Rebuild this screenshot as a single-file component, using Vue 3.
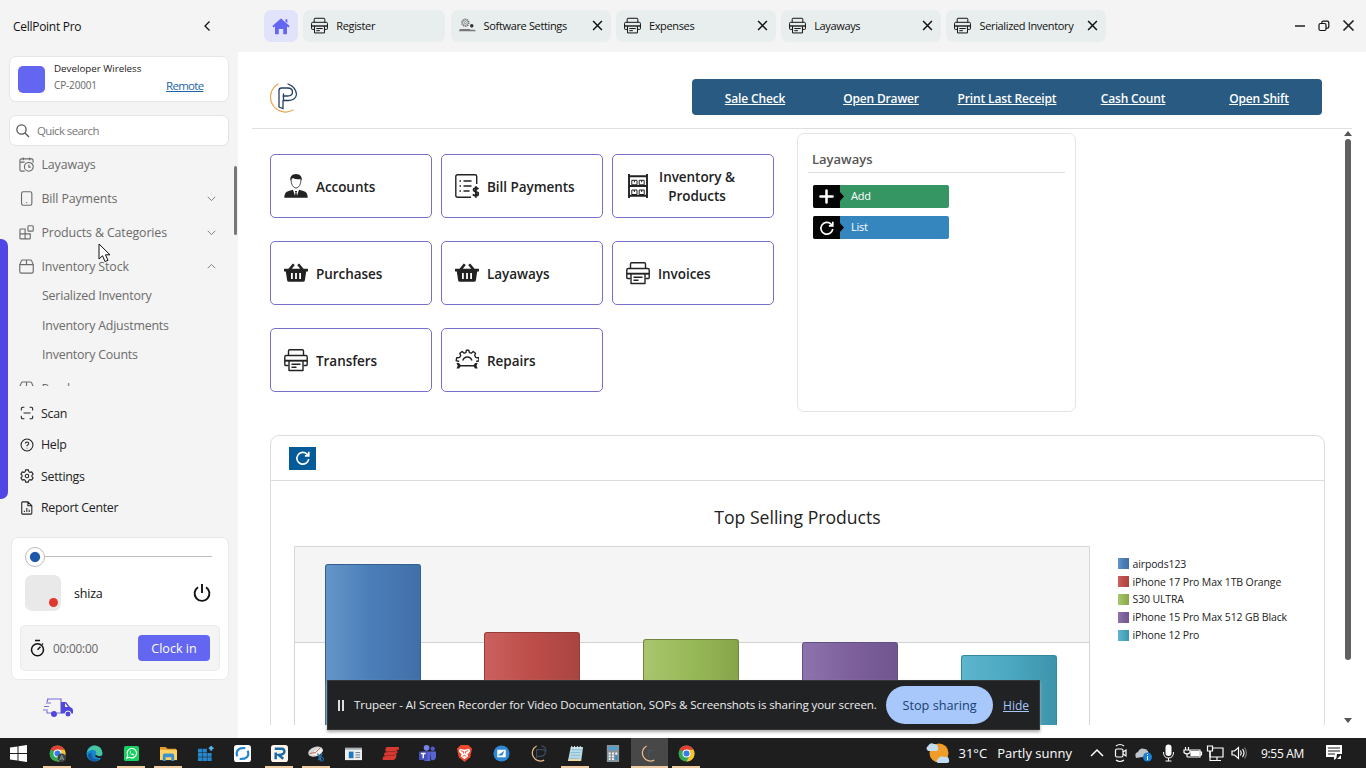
<template>
  <div class="screen">
    <!-- 图标集合 -->
    <svg class="sprite" aria-hidden="true">
      <symbol id="printer" viewBox="0 0 24 24">
        <g fill="none" stroke="currentColor" stroke-width="1.4" stroke-linejoin="round">
          <path d="M4.500 7.500V3q0-1.200 1.200-1.200h12.600q1.200 0 1.200 1.200v4.500" />
          <path d="M4.500 17.500H1.800q-1 0-1-1V9q0-1.500 1.500-1.500h19.400q1.500 0 1.500 1.500v7.500q0 1-1 1h-2.700" />
          <path d="M.8 12.700h22.400" stroke-width="1.900" />
          <path d="M5 13v9.500h14V13M7.500 16.300h9M7.500 19.300h5" />
        </g>
      </symbol>
      <symbol id="basket" viewBox="0 0 24 24">
        <path fill="currentColor" fill-rule="evenodd" d="M.5 7.800h4L8.800 2.600l2 1.400-3 3.800h8.400l-3-3.800 2-1.400 4.300 5.200h4q.5 0 .5.500V10q0 .6-.6.600h-1.200l-1.300 8.600q-.2 1.600-1.900 1.600H5q-1.700 0-1.900-1.600l-1.300-8.600H.6Q0 10.600 0 10V8.300q0-.5.500-.5zM7 12v6h1.800v-6zm4.100 0v6h1.800v-6zm4.100 0v6H17v-6z" />
      </symbol>
      <symbol id="person" viewBox="0 0 24 24">
        <path d="M7 5q0 8 5 9.200Q17 13 17 5" fill="none" stroke="currentColor" stroke-width=".8" />
        <path fill="currentColor" d="M6.500 6.500Q5.500 0 12 0q6.500 0 5.500 6.500L16.500 5Q12 6 9 4 7.500 4.700 6.500 6.500zM.3 23.800q0-5.500 3.700-6.500l5-1.500 2 6 .5-3.300-.7-1.500h2.400l-.7 1.500.5 3.300 2-6 5 1.500q3.700 1 3.700 6.500z" />
      </symbol>
      <symbol id="bill" viewBox="0 0 24 24">
        <path d="M16 23.200H2.500Q.8 23.200.8 21.500v-19Q.8.800 2.500.8H20q1.700 0 1.700 1.700V10M8.500 7h8M8.500 12h8M8.500 17h6M4.500 7H6M4.500 12H6M4.500 17H6" fill="none" stroke="currentColor" stroke-width="1.400" />
        <path d="M23.300 15.200q-1-1.400-3-1.100-1.900.3-1.700 2 .2 1.200 2.200 1.600 2.600.5 2.600 2.100 0 1.900-2.500 2-2 0-3-1.400M20.900 12.200v11.500" fill="none" stroke="currentColor" stroke-width="1.900" />
      </symbol>
      <symbol id="shelves" viewBox="0 0 24 24">
        <g fill="none" stroke="currentColor">
          <path d="M3 0v24M21 0v24M3 2.200h18M3 12h18M3 21.800h18" stroke-width="1.900" />
          <path d="M5.800 6.300H11v4.500H5.800zM13.200 6.300h5v4.500h-5zM5.800 16H11v4.500H5.800zM13.200 16h5v4.500h-5zM8.400 6.300v2M15.700 6.300v2M8.400 16v2M15.700 16v2" />
        </g>
      </symbol>
      <symbol id="repair" viewBox="0 0 24 24">
        <path d="M4.200 13.500 1.200 12.600 1.700 9.700l2.800-.2 1.200-1.900-.9-2.400 2.400-1.700 2 1.700 1.700-.5.500-2.400h2.400l.6 2.400 1.800.5 2-1.700 2.300 1.700-.8 2.400 1.200 1.900 2.700.2.600 2.900-3 .9M7.700 12.500Q9 9 12.300 9t4.700 3.500" fill="none" stroke="currentColor" stroke-width="1.400" stroke-linejoin="round" />
        <path fill="currentColor" d="M1.500 15H4l1.600 1.900h13L20.200 15h2.500l-1.200 2.700 1.200 2.800h-2.500l-1.600-1.900h-13L4 20.500H1.500l1.200-2.800z" />
      </symbol>
      <symbol id="cogs" viewBox="0 0 24 24">
        <g fill="none" stroke="#777">
          <circle cx="9" cy="8" r="5" stroke-width="2" stroke-dasharray="2 1.100" />
          <circle cx="9" cy="8" r="3.800" />
          <circle cx="9" cy="8" r="1.500" />
        </g>
        <circle cx="18" cy="12.500" r="2.500" fill="#333" />
        <path d="M1 17h15v3H0zM17 18h5l2 2H14" fill="#777" />
      </symbol>
      <symbol id="home" viewBox="0 0 24 24">
        <path fill="currentColor" d="M11 2.500q1-1 2 0L23.500 12 22 14l-2-1.500V22q0 1-1 1h-4v-7H9v7H5q-1 0-1-1v-9.500L2 14 .5 12zM18 3h2.500v5L18 6z" />
      </symbol>
      <symbol id="close" viewBox="0 0 16 16"><path d="M3.300 3.300l9.400 9.400M12.700 3.300l-9.400 9.400" stroke="currentColor" stroke-width="1.600" fill="none" /></symbol>
      <symbol id="down" viewBox="0 0 16 16"><path d="M2.500 5.500L8 11l5.500-5.500" fill="none" stroke="currentColor" stroke-width="1.200" /></symbol>
      <symbol id="refresh" viewBox="0 0 16 16"><path d="M13.700 9A5.900 5.900 0 1 1 12 4.100l1.600 1.500M13.800 1.800v4H9.900" fill="none" stroke="currentColor" stroke-width="1.700" /></symbol>
      <symbol id="calendar" viewBox="0 0 16 16"><path d="M6 15H2.500q-1.500 0-1.500-1.500V3.500Q1 2 2.500 2h11Q15 2 15 3.500V6M4.500.5v3M11.500.5v3M1 5.500h5M10.500 8v2.800h2" /><circle cx="10.500" cy="10.500" r="4.700" /></symbol>
      <symbol id="phone" viewBox="0 0 16 16"><rect x="2.700" y=".8" width="11" height="14.400" rx="1.800" /><path d="M7.700 12.400h1" /></symbol>
      <symbol id="blocks" viewBox="0 0 16 16"><path d="M1.800 4.300h4.700v10.500H1.800q-.8 0-.8-.8V5.200q0-.9.800-.9zM1 9.500h11V14q0 .8-.8.800H6.500" /><rect x="9.500" y=".8" width="5.700" height="5.700" rx="1" /></symbol>
      <symbol id="box" viewBox="0 0 16 16"><path d="M.8 6v7.200q0 1.800 1.800 1.800h10.800q1.800 0 1.800-1.800V6zM.8 6l1.700-4q.4-1 1.500-1h8q1.100 0 1.500 1l1.700 4M8 1v4.800" /></symbol>
      <symbol id="scan" viewBox="0 0 16 16"><path d="M1.500 5V3q0-1.500 1.500-1.500h2M11 1.500h2q1.500 0 1.500 1.500v2M14.500 11v2q0 1.500-1.500 1.500h-2M5 14.500H3q-1.500 0-1.500-1.500v-2M4 8h8" /></symbol>
      <symbol id="help" viewBox="0 0 16 16"><circle cx="8" cy="8" r="6.800" /><path d="M6 6.300q0-1.700 2-1.800 2 .1 2 1.800 0 1-2 2.300v.7M8 11v1" /></symbol>
      <symbol id="gear" viewBox="0 0 16 16"><path d="M6.500 1h3l.6 2 1.300.8 2-.5L15 6l-1.400 1.300v1.400L15 10l-1.600 2.700-2-.5-1.300.8-.6 2h-3l-.6-2-1.300-.8-2 .5L1 10l1.400-1.300V7.300L1 6l1.600-2.700 2 .5L5.900 3z" /><circle cx="8" cy="8" r="2" /></symbol>
      <symbol id="report" viewBox="0 0 16 16"><path d="M3 1h6L13.500 5.500V14q0 1-1 1H3q-1 0-1-1V2q0-1 1-1zM9 1v4.500h4.500M5 11v1.500M7.800 8v4.500M10.500 10v2.500" /></symbol>
    </svg>

    <div class="workspace">
      <aside class="sidebar">
        <div class="brand">
          <span>CellPoint Pro</span>
          <svg width="12" height="12" viewBox="0 0 12 12"><path d="M8.500 1.500L4 6l4.500 4.500" fill="none" stroke="#111" stroke-width="1.300" /></svg>
        </div>
        <div class="company">
          <i class="company-logo"></i>
          <div class="company-name"><b>Developer Wireless</b><span>CP-20001</span></div>
          <a class="remote">Remote</a>
        </div>
        <div class="search">
          <svg width="14" height="14" viewBox="0 0 14 14"><g fill="none" stroke="#555" stroke-width="1.300"><circle cx="5.500" cy="5.500" r="4.600" /><path d="M9 9l4 4" /></g></svg>
          <span>Quick search</span>
        </div>
        <nav class="nav">
          <template v-for="item in menu" :key="item.label">
            <div class="nav-item">
              <svg class="line-icon"><use :href="'#' + item.icon" /></svg>
              <span>{{ item.label }}</span>
              <svg v-if="item.arrow" class="arrow" :class="{ open: item.children }"><use href="#down" /></svg>
            </div>
            <div v-for="child in item.children" :key="child" class="nav-child">{{ child }}</div>
          </template>
          <i class="nav-scroll"></i>
        </nav>
        <div class="links">
          <div v-for="link in links" :key="link.label" class="link">
            <svg class="line-icon"><use :href="'#' + link.icon" /></svg>
            <span>{{ link.label }}</span>
          </div>
        </div>
        <div class="user-card">
          <div class="slider"><i></i></div>
          <div class="user">
            <div class="avatar"><i></i></div>
            <span>shiza</span>
            <svg width="18" height="20" viewBox="0 0 18 20"><path d="M5 4.200a7.400 7.400 0 1 0 8 0M9 1v9" fill="none" stroke="#111" stroke-width="1.900" /></svg>
          </div>
          <div class="clock">
            <svg width="15" height="18" viewBox="0 0 15 18"><g fill="none" stroke="#111" stroke-width="1.500"><circle cx="7.500" cy="10.700" r="6" /><path d="M5 1.500h5M7.500 10.700l3-3M12 5.500l1-1" /></g></svg>
            <span>00:00:00</span>
            <button>Clock in</button>
          </div>
        </div>
        <svg class="truck" width="30" height="21" viewBox="0 0 30 21">
          <path d="M4 2h14v14h-4M9 16H6M5 2l-1 3M3 6h5M1 9.500h5M0 13h5M4 14v2h2" fill="none" stroke="#7770dc" stroke-width="1.200" />
          <path fill="#5048dc" d="M18 5h5l4 5q3 1 3 3v3.500H18zm4 1.500V10h3l-2.500-3.500z" />
          <circle cx="11" cy="17" r="3" fill="#5048dc" /><circle cx="25" cy="17" r="3" fill="#5048dc" stroke="#f4f4f4" />
        </svg>
      </aside>

      <main class="main">
        <header class="tabs">
          <div class="home"><svg width="18" height="18"><use href="#home" /></svg></div>
          <div v-for="tab in tabs" :key="tab.label" class="tab" :class="{ first: !tab.closable }">
            <svg width="17" height="17"><use :href="'#' + tab.icon" /></svg>
            <span>{{ tab.label }}</span>
            <svg v-if="tab.closable" class="close" width="15" height="15"><use href="#close" /></svg>
          </div>
          <div class="window-buttons">
            <svg width="12" height="12" viewBox="0 0 12 12"><path d="M1 6h10" stroke="#111" stroke-width="1.400" /></svg>
            <svg width="12" height="12" viewBox="0 0 12 12"><path d="M2.500 3.500h4q1.500 0 1.500 1.500v4q0 1.500-1.500 1.500h-4Q1 10.500 1 9V5q0-1.500 1.500-1.500zM3.800 3.500V2.700q0-1.500 1.500-1.500h4q1.500 0 1.500 1.500v4q0 1.500-1.500 1.500H8" fill="none" stroke="#111" stroke-width="1.200" /></svg>
            <svg width="17" height="17"><use href="#close" /></svg>
          </div>
        </header>

        <div class="topline">
          <svg width="28" height="31" viewBox="0 0 28 31">
            <g fill="none" stroke-linecap="round">
              <path d="M8 2A13.500 13.500 0 0 0 23 28" stroke="#eda55a" stroke-width="1.300" />
              <path d="M18 2q8 3 8.500 10.500-.8 5.500-8 6h-5V12M9 25V8.500Q9 6 11.500 6h6q5 0 5 4t-5 4H13M9 25l4 1.500v-8" stroke="#243f62" stroke-width="1.300" />
            </g>
          </svg>
          <div class="actions"><a v-for="action in actions" :key="action">{{ action }}</a></div>
        </div>

        <div class="content">
          <div class="upper">
            <div class="tiles">
              <div v-for="tile in tiles" :key="tile.label" class="tile">
                <svg width="24" height="24"><use :href="'#' + tile.icon" /></svg>
                <span>{{ tile.label }}</span>
              </div>
            </div>
            <section class="panel">
              <h3>Layaways</h3>
              <div class="command add"><i><svg width="15" height="15" viewBox="0 0 16 16"><path d="M8 1.500v13M1.500 8h13" stroke="#fff" stroke-width="2.700" stroke-linecap="round" /></svg></i><span>Add</span></div>
              <div class="command list"><i><svg width="16" height="16"><use href="#refresh" /></svg></i><span>List</span></div>
            </section>
          </div>

          <section class="chart-card">
            <div class="chart-tools"><i><svg width="16" height="16"><use href="#refresh" /></svg></i></div>
            <h2>Top Selling Products</h2>
            <div class="chart-row">
              <div class="plot">
                <div v-for="bar in bars" :key="bar.name" class="bar" :class="bar.color" :style="{ height: bar.height + 'px' }"></div>
              </div>
              <ul class="legend">
                <li v-for="bar in bars" :key="bar.name"><i :class="bar.color"></i>{{ bar.name }}</li>
              </ul>
            </div>
          </section>
        </div>
        <div class="scrollbar"><i class="up"></i><i class="thumb"></i><i class="dn"></i></div>
      </main>
    </div>

    <footer class="taskbar">
      <div class="start"><svg width="17" height="17" viewBox="0 0 17 17"><path fill="#fff" d="M0 2.500L7.500 1.400V8H0zM8.500 1.200L17 0v8H8.500zM0 9h7.500v6.600L0 14.500zM8.500 9H17v8l-8.500-1.200z" /></svg></div>
      <div v-for="app in apps" :key="app.name" class="app" :class="{ running: app.running, current: app.current }">
        <svg width="17" height="17" viewBox="0 0 18 18">
          <template v-if="app.name.startsWith('chrome')">
            <circle cx="9" cy="9" r="8.500" fill="#35a853" />
            <path d="M9 9L1.600 4.700A8.500 8.500 0 0 1 16.400 5z" fill="#e24235" />
            <path d="M9 5h7.500A8.500 8.500 0 0 1 9 17.500L12.500 11z" fill="#fbc22d" />
            <circle cx="9" cy="9" r="4.200" fill="#fff" /><circle cx="9" cy="9" r="3.200" fill="#347be7" />
            <template v-if="app.name === 'chrome-profile'"><circle cx="13.500" cy="13.500" r="4.500" fill="#3c4545" /><path d="M11.500 16l2-5 2 5M12 14.500h3" stroke="#8ca08d" fill="none" /></template>
          </template>
          <template v-else-if="app.name === 'edge'"><circle cx="9" cy="9" r="8.500" fill="#1687cf" /><path d="M2 5Q8-3 15 3q4 5 1 9-3 1-6-1Q13 6 7 5 4 5 1 8z" fill="#49c6a0" /><path d="M6 8q-1 8 8 7-7 5-11-1-3-5 3-6z" fill="#155ca6" /><path d="M10 11q3 3 7 1" stroke="#1e1e1e" stroke-width="2" fill="none" /></template>
          <template v-else-if="app.name === 'whatsapp'"><rect x="1" y="1" width="16" height="16" rx="2" fill="#18cf61" /><path d="M4 14l1-3a5 5 0 1 1 2 2z" fill="none" stroke="#fff" stroke-width="1.200" /><path d="M7 6q0 4 4 5l1-1-2-1-1 .5L8 8l.5-1z" fill="#fff" /></template>
          <template v-else-if="app.name === 'explorer'"><path d="M0 2h6l2 2h9v4H0z" fill="#e49a28" /><path d="M0 5h18v11H0z" fill="#ffd264" /><path d="M3 17v-6q0-2 2-2h8q2 0 2 2v6h-3v-4H6v4z" fill="#3c91cf" /></template>
          <template v-else-if="app.name === 'blocks'"><path d="M1 4h4.500v4H1zM6 4h4.500v4H6zM1 8.500h4.500v4H1zM6 8.500h4.500v4H6zM11 8.500h4.500v4H11zM1 13h4.500v4H1zM6 13h4.500v4H6zM11 13h4.500v4H11z" fill="#2787cc" /><path d="M15 1v5M12.500 3.500h5" stroke="#55b5ee" stroke-width="2" /></template>
          <template v-else-if="app.name === 'sync'"><rect width="18" height="18" rx="3" fill="#fff" /><path d="M3.500 12Q1 6 7 3.500l5-.3M14.500 6q2.500 6-3.500 8.500l-5 .3" fill="none" stroke="#2187d4" stroke-width="2.300" /></template>
          <template v-else-if="app.name === 'rapid'"><rect width="18" height="18" rx="3" fill="#fff5ec" /><path d="M5 15V8M4 4h7q4 0 3 4-1 2.500-6 2.500l5 4" fill="none" stroke="#176aa5" stroke-width="2.600" /></template>
          <template v-else-if="app.name === 'snip'"><ellipse cx="8" cy="7" rx="8" ry="5" fill="#d5d7d6" transform="rotate(-20 8 7)" /><path d="M2 10l10-7 4 3-6 5z" fill="#f4f2ec" /><path d="M2 9l6-1 5-5" fill="none" stroke="#b9544f" /><path d="M10 9l4 7M15 9l-4 7" stroke="#2775b8" stroke-width="1.500" /><circle cx="14.500" cy="15" r="2" fill="none" stroke="#2775b8" /></template>
          <template v-else-if="app.name === 'window'"><path d="M0 3h18v13H0z" fill="#edf0ef" /><path d="M0 3h18v2H0z" fill="#a7b1b3" /><path d="M4 7h5v7H4z" fill="#1c79bd" /><path d="M11 8h5M11 10.500h5M11 13h5" stroke="#678" /></template>
          <template v-else-if="app.name === 'express'"><path d="M5 2h12q2 0 1 3h-3q2 1 1 4h-2q2 1 1 4-1 3-4 3H1q-1-2 1-4h2q-3-1-1-4h2Q2 5 5 2z" fill="#d93931" /><path d="M4 7h11M4 11h10" stroke="#942d29" /></template>
          <template v-else-if="app.name === 'teams'"><circle cx="8" cy="3" r="3" fill="#7b83eb" /><circle cx="14.500" cy="4" r="2.300" fill="#5059c9" /><path d="M4 7h8v10H7q-4-1-3-4zM12 7h6v6q-1 4-5 3" fill="#5964d5" /><rect y="7" width="9" height="9" rx="1" fill="#4650bd" /><path d="M2 9h5M4.500 9v5" stroke="#fff" stroke-width="1.500" /></template>
          <template v-else-if="app.name === 'brave'"><path d="M5 0h8l4 4-2 9-6 5-6-5L1 4z" fill="#ed4930" /><path d="M4 4l5 1 5-1 1 3-3 3 1 2-4 3-4-3 1-2-3-3z" fill="#fff" /><path d="M5 6l3 1v2M13 6l-3 1v2M7 12l2-1 2 1" stroke="#ed4930" fill="none" /></template>
          <template v-else-if="app.name === 'remote'"><circle cx="9" cy="9" r="8.500" fill="#2d88d6" /><path d="M4.500 5h9v8h-9z" fill="#fff" /><path d="M5 11l7-5-2 5z" fill="#2d88d6" /></template>
          <template v-else-if="app.name === 'point'"><path d="M7 1A8 8 0 1 0 15 16" fill="none" stroke="#edbd8b" stroke-width="1.300" /><path d="M7 14V5h6q4 0 3 4-1 3-5 3H8M12 1q5 1 5 6" fill="none" stroke="#394a60" stroke-width="1.300" /></template>
          <template v-else-if="app.current"><path d="M6 1A8 8 0 1 0 14 16" fill="none" stroke="#edbd8b" stroke-width="1.300" /><path d="M8 14V6h5" fill="none" stroke="#4d5661" /></template>
          <template v-else-if="app.name === 'notes'"><path d="M4 2h13l-2 15H1z" fill="#b9dce7" /><path d="M2 15h13l-1 2H1z" fill="#f2d69b" /><path d="M5 5h10M4 8h10M4 11h10M3 14h10" stroke="#8bb9c9" /><path d="M5 1v3M8 1v3M11 1v3M14 1v3" stroke="#eee" /></template>
          <template v-else><path d="M3 0h13v18H3z" fill="#87939a" /><path d="M5 2h9v3H5z" fill="#44a6dc" /><path d="M5 8h2v2H5zM8.500 8h2v2h-2zM12 8h2v2h-2zM5 11h2v2H5zM8.500 11h2v2h-2zM5 14h2v2H5zM8.500 14h2v2h-2z" fill="#fff" /><path d="M12 11h2v5h-2z" fill="#258fd0" /></template>
        </svg>
      </div>
      <div class="tray">
        <svg class="weather" width="24" height="23" viewBox="0 0 24 23"><circle cx="13" cy="11" r="9.500" fill="#ef9d28" /><path d="M2 9q-3-3 0-5 2-4 6-2 4 0 4 4 1 3-2 3zM12 21q-3-2 0-4 2-4 6-2 5-1 5 3 1 3-2 3z" fill="#c4dcef" /></svg>
        <span class="temp">31°C</span>
        <span class="sky">Partly sunny</span>
        <svg class="tray-icons" width="156" height="24" viewBox="0 0 156 24">
          <g fill="none" stroke="#fff" stroke-width="1.200">
            <path d="M1 15l6-6 6 6" stroke-width="1.500" />
            <rect x="25.500" y="8" width="7.500" height="8" rx="1.500" /><path d="M33 11l3-2v6l-3-2M26 5q4-3 8 0M26 19q4 3 8 0" />
            <path d="M99 9h11v7H97M110.500 11h1v3h-1M95.500 6v3M98.500 6v3M94 9h6v2.500q-3 3-6 0zM97 13v3" /><path d="M101 10.500h8v4h-8z" fill="#fff" />
            <path d="M120 7h13v9h-13zM127 16v3M123 19.500h8" /><path d="M117.500 5h5v5h-5z" fill="#1e1e1e" /><path d="M120 10v9.500h3" />
            <path d="M142 10h2.500l4-3.500v11l-4-3.500H142zM150.500 9.500q1.500 2.500 0 5M152.500 8q3 4 0 8" /><path d="M154.500 6.500q4 5.500 0 11" stroke="#777" />
          </g>
          <path d="M46 17q-2-5 2-6 2-5 7-3 4 1 4 7z" fill="#bec5c8" /><circle cx="57.500" cy="16" r="4.500" fill="#1881d5" /><path d="M57.500 13v1M57.500 15v4" stroke="#fff" />
          <rect x="75.500" y="3.500" width="6" height="11.500" rx="3" fill="#fff" /><path d="M73.500 11q0 6 5 6t5-6M78.500 17v3M75.500 20h6" fill="none" stroke="#fff" />
        </svg>
        <span class="time">9:55 AM</span>
        <svg class="notice" width="18" height="18" viewBox="0 0 18 18"><path d="M1 1h16v12h-4l-4 3v-3H1z" fill="#fff" /><path d="M3 4h12M3 7h12M3 10h7" stroke="#1e1e1e" stroke-width="1.200" /><path d="M12 10h5v6l-6 1z" fill="#1e1e1e" /><path d="M12 15l4-4v4z" fill="#fff" /></svg>
      </div>
    </footer>

    <i class="edge-strip"></i>
    <svg class="cursor" width="13" height="20" viewBox="0 0 13 20"><path d="M1 1v15l3.500-3.300L7 18.500l3-1.200-2.500-5.500H12z" fill="#fff" stroke="#111" /></svg>
    <div class="share">
      <i class="pause"></i>
      <span>Trupeer - AI Screen Recorder for Video Documentation, SOPs &amp; Screenshots is sharing your screen.</span>
      <button>Stop sharing</button>
      <a>Hide</a>
    </div>
  </div>
</template>

<script setup>
// 左侧菜单
const menu = [
  { label: 'Layaways', icon: 'calendar' },
  { label: 'Bill Payments', icon: 'phone', arrow: true },
  { label: 'Products & Categories', icon: 'blocks', arrow: true },
  {
    label: 'Inventory Stock',
    icon: 'box',
    arrow: true,
    children: ['Serialized Inventory', 'Inventory Adjustments', 'Inventory Counts'],
  },
  { label: 'Purchases', icon: 'box', arrow: true },
];

const links = [
  { label: 'Scan', icon: 'scan' },
  { label: 'Help', icon: 'help' },
  { label: 'Settings', icon: 'gear' },
  { label: 'Report Center', icon: 'report' },
];

// 顶部标签页
const tabs = [
  { label: 'Register', icon: 'printer' },
  { label: 'Software Settings', icon: 'cogs', closable: true },
  { label: 'Expenses', icon: 'printer', closable: true },
  { label: 'Layaways', icon: 'printer', closable: true },
  { label: 'Serialized Inventory', icon: 'printer', closable: true },
];

const actions = ['Sale Check', 'Open Drawer', 'Print Last Receipt', 'Cash Count', 'Open Shift'];

const tiles = [
  { label: 'Accounts', icon: 'person' },
  { label: 'Bill Payments', icon: 'bill' },
  { label: 'Inventory & Products', icon: 'shelves' },
  { label: 'Purchases', icon: 'basket' },
  { label: 'Layaways', icon: 'basket' },
  { label: 'Invoices', icon: 'printer' },
  { label: 'Transfers', icon: 'printer' },
  { label: 'Repairs', icon: 'repair' },
];

// 图表数据
const bars = [
  { name: 'airpods123', height: 162, color: 'blue' },
  { name: 'iPhone 17 Pro Max 1TB Orange', height: 94, color: 'red' },
  { name: 'S30 ULTRA', height: 87, color: 'green' },
  { name: 'iPhone 15 Pro Max 512 GB Black', height: 84, color: 'purple' },
  { name: 'iPhone 12 Pro', height: 71, color: 'teal' },
];

// 任务栏程序
const apps = [
  { name: 'chrome-profile', running: true },
  { name: 'edge' },
  { name: 'whatsapp', running: true },
  { name: 'explorer', running: true },
  { name: 'blocks' },
  { name: 'sync' },
  { name: 'rapid', running: true },
  { name: 'snip', running: true },
  { name: 'window' },
  { name: 'express' },
  { name: 'teams' },
  { name: 'brave' },
  { name: 'remote' },
  { name: 'point' },
  { name: 'notes', running: true },
  { name: 'calculator' },
  { name: 'cellpoint', current: true },
  { name: 'chrome', running: true },
];
</script>

<style>
body {
  overflow: hidden;
}
</style>

<style scoped>
* {
  box-sizing: border-box;
}

.screen {
  position: relative;
  width: 1366px;
  height: 768px;
  overflow: hidden;
  display: flex;
  flex-direction: column;
  background: #fff;
  color: #222;
  font: 12px "Segoe UI", "Open Sans", "Noto Sans", sans-serif;
}

svg,
i {
  display: block;
  flex: none;
}

span,
a {
  white-space: nowrap;
}

button {
  border: 0;
  padding: 0;
  font: inherit;
}

.sprite {
  position: absolute;
  width: 0;
  height: 0;
}

.workspace {
  display: flex;
  height: 738px;
}

/* 侧边栏 */
.sidebar {
  width: 238px;
  background: #f4f4f4;
  display: flex;
  flex-direction: column;
}

.brand {
  height: 56px;
  padding: 0 25px 4px 13px;
  display: flex;
  align-items: center;
  justify-content: space-between;
  color: #111;
  font-weight: 500;
  letter-spacing: -0.28px;
}

.company {
  width: 220px;
  height: 46px;
  margin-left: 9px;
  border: 1px solid #e6e6e6;
  border-radius: 7px;
  background: #fff;
  display: flex;
  align-items: center;
  padding-left: 8px;
}

.company-logo {
  width: 27px;
  height: 27px;
  border-radius: 5px;
  background: #6366f1;
}

.company-name {
  width: 113px;
  margin-left: 9px;
  padding-bottom: 4px;
  font-size: 10px;
  line-height: 17px;
  color: #666;
  letter-spacing: -0.15px;
  display: flex;
  flex-direction: column;
}

.company-name b {
  color: #222;
  font-weight: 500;
  white-space: nowrap;
  font-size: 9.8px;
  letter-spacing: -0.02px;
}

.remote {
  padding-top: 13px;
  margin-left: -1px;
  font-size: 11.5px;
  letter-spacing: -0.75px;
  color: #1b64a5;
  letter-spacing: -0.7px;
  text-decoration: underline;
}

.search {
  width: 220px;
  height: 31px;
  margin: 13px 0 0 9px;
  border: 1px solid #e4e4e4;
  border-radius: 7px;
  background: #fff;
  display: flex;
  align-items: center;
  gap: 7px;
  padding-left: 6px;
  color: #777;
  font-size: 11.5px;
  letter-spacing: -0.65px;
}

.search span {
  letter-spacing: -0.6px;
}

.nav {
  position: relative;
  height: 239px;
  margin-top: 1px;
  overflow: hidden;
  color: #6b6b6b;
  font-size: 12.4px;
  letter-spacing: -0.2px;
}

.nav-item {
  height: 34px;
  padding: 0 19px;
  display: flex;
  align-items: center;
}

.nav-item span {
  margin-left: 7.5px;
  letter-spacing: -0.13px;
}

.line-icon {
  width: 15px;
  height: 15px;
  fill: none;
  stroke: currentColor;
  stroke-width: 1.2;
}

.arrow {
  width: 11px;
  height: 11px;
  margin-left: auto;
  margin-right: 2px;
}

.arrow.open {
  transform: rotate(180deg);
}

.nav-child {
  height: 29.500px;
  padding-left: 42px;
  line-height: 25px;
}

.nav-scroll {
  position: absolute;
  right: 1px;
  top: 19px;
  width: 3px;
  height: 69px;
  border-radius: 2px;
  background: #777;
}

.links {
  padding: 11.500px 0 0 20px;
  height: 151px;
  color: #222;
  font-size: 12.4px;
  letter-spacing: -0.3px;
}

.link {
  height: 31.500px;
  display: flex;
  align-items: center;
  gap: 7px;
}

.link .line-icon {
  width: 14px;
  height: 14px;
}

.user-card {
  width: 218px;
  height: 143px;
  margin-left: 11px;
  border: 1px solid #e8e8e8;
  border-radius: 7px;
  background: #fff;
}

.slider {
  width: 187px;
  height: 37px;
  margin-left: 13px;
  display: flex;
  align-items: center;
}

.slider::after {
  content: "";
  flex: 1;
  height: 1px;
  background: #bdbdbd;
}

.slider i {
  width: 20px;
  height: 20px;
  border: 1px solid #bbb;
  border-radius: 50%;
  background: radial-gradient(circle, #1c57aa 0 4.6px, #fff 5.6px);
}

.user {
  height: 36px;
  padding: 0 17px 0 13px;
  display: flex;
  align-items: center;
  color: #111;
  font-size: 12.5px;
  font-weight: 500;
  letter-spacing: -0.2px;
}

.user span {
  flex: 1;
  margin-left: 13px;
  padding-top: 1px;
}

.avatar {
  width: 36px;
  height: 36px;
  border-radius: 7px;
  background: #e9e9e9;
  padding: 23px 0 0 24px;
}

.avatar i {
  width: 9px;
  height: 9px;
  border-radius: 50%;
  background: #df382c;
}

.clock {
  width: 200px;
  height: 46px;
  margin: 14px 0 0 8px;
  border: 1px solid #eaeaea;
  border-radius: 5px;
  background: #f4f4f4;
  display: flex;
  align-items: center;
  padding: 0 9px 0 9px;
  color: #666;
  font-size: 11.8px;
  letter-spacing: -0.2px;
}

.clock span {
  flex: 1;
  margin-left: 8px;
}

.clock button {
  width: 72px;
  height: 26px;
  border-radius: 4px;
  background: #6366f1;
  color: #fff;
  font-size: 12.6px;
}

.truck {
  margin: 17px 0 0 43px;
}

/* 主区域 */
.main {
  position: relative;
  width: 1128px;
  display: flex;
  flex-direction: column;
}

.tabs {
  height: 52px;
  background: #f4f4f4;
  padding: 10px 9px 0 26px;
  display: flex;
  gap: 5.3px;
}

.home {
  width: 34px;
  height: 32px;
  border-radius: 7px;
  background: #e0e3fa;
  color: #6366f1;
  display: grid;
  place-items: center;
}

.tab {
  width: 160px;
  height: 32px;
  border-radius: 7px;
  background: #e8eeed;
  display: flex;
  align-items: center;
  padding: 0 6px 1px 8px;
  color: #111;
  font-size: 11px;
  letter-spacing: -0.35px;
}

.tab.first {
  width: 142px;
}

.tab span {
  margin-left: 8px;
}

.close {
  margin-left: auto;
}

.window-buttons {
  height: 32px;
  margin-left: auto;
  padding-bottom: 1px;
  display: flex;
  align-items: center;
  gap: 12px;
}

.window-buttons svg:last-child {
  margin-left: -2px;
}

.topline {
  height: 77px;
  width: 1100px;
  margin-left: 14px;
  padding: 14px 30px 0 18px;
  border-bottom: 1px solid #dfdfdf;
  display: flex;
  align-items: center;
  justify-content: space-between;
}

.actions {
  width: 630px;
  height: 36px;
  padding-top: 2px;
  border-radius: 4px;
  background: #295a82;
  display: flex;
  align-items: center;
  color: #fff;
  font-size: 12px;
  font-weight: 600;
}

.actions a {
  flex: 1;
  text-align: center;
  text-decoration: underline;
  letter-spacing: -0.15px;
}

.content {
  height: 596px;
  padding-left: 32px;
  overflow: hidden;
}

.upper {
  height: 306px;
  display: flex;
  gap: 23px;
}

.tiles {
  width: 504px;
  padding-top: 25px;
  display: grid;
  grid-template-columns: repeat(3, 162px);
  grid-auto-rows: 64px;
  gap: 23px 9px;
}

.tile {
  border: 1px solid #7770cb;
  border-radius: 5px;
  display: flex;
  align-items: center;
  padding-left: 13px;
  color: #222;
  font-size: 13.500px;
  font-weight: 600;
  letter-spacing: -0.05px;
}

.tile span {
  max-width: 96px;
  margin: 2px 0 0 8px;
  line-height: 19px;
  white-space: normal;
  text-align: center;
}

.tile:nth-child(3) span {
  max-width: 78px;
}

.panel {
  width: 279px;
  height: 279px;
  margin-top: 4px;
  border: 1px solid #e4e4e4;
  border-radius: 7px;
  padding: 12px 10px;
}

.panel h3 {
  height: 27px;
  margin: 0 0 12px;
  padding-left: 4px;
  border-bottom: 1px solid #ddd;
  color: #555;
  font-size: 13px;
  font-weight: 600;
  line-height: 27px;
}

.command {
  width: 136px;
  height: 23px;
  margin: 0 0 8px 5px;
  border-radius: 2px;
  overflow: hidden;
  display: flex;
  align-items: center;
  color: #fff;
  font-size: 11px;
}

.command i {
  width: 31px;
  height: 23px;
  padding-left: 6px;
  background: #050505;
  clip-path: polygon(0 0, 27px 0, 27px 7px, 31px 11.5px, 27px 16px, 27px 23px, 0 23px);
  display: flex;
  align-items: center;
}

.command span {
  margin-left: 7px;
  padding-bottom: 2px;
  letter-spacing: -0.25px;
}

.add {
  background: #359563;
}

.list {
  background: #3586bf;
}

/* 销售图表 */
.chart-card {
  width: 1055px;
  height: 310px;
  border: 1px solid #dcdcdc;
  border-radius: 9px;
}

.chart-tools {
  height: 45px;
  border-bottom: 1px solid #dcdcdc;
  padding-left: 18px;
  display: flex;
  align-items: center;
}

.chart-tools i {
  width: 27px;
  height: 23px;
  background: #045b99;
  color: #fff;
  display: grid;
  place-items: center;
}

.chart-card h2 {
  margin: 0;
  height: 65px;
  line-height: 73px;
  text-align: center;
  color: #222;
  font-size: 17.600px;
  font-weight: 500;
}

.chart-row {
  display: flex;
  padding-left: 23px;
}

.plot {
  width: 796px;
  height: 180px;
  border: 1px solid #d6d6d6;
  border-bottom: 0;
  background: linear-gradient(#f5f5f5 0 95px, #d2d2d2 95px 96px, #fff 96px);
  display: flex;
  align-items: flex-end;
  gap: 63.200px;
  padding-left: 29.500px;
}

.bar {
  flex: none;
  width: 96px;
  border: 1px solid #365f91;
  border-bottom: 0;
  border-radius: 3px 3px 0 0;
}

.blue {
  background: linear-gradient(90deg, #6596c9, #4b7fb9 45%, #416fa8);
}

.red {
  background: linear-gradient(90deg, #ca615e, #bd4d49 50%, #a94542);
  border-color: #953d38;
}

.green {
  background: linear-gradient(90deg, #a8c66f, #98b957 50%, #86a54b);
  border-color: #70843f;
}

.purple {
  background: linear-gradient(90deg, #8d73ac, #7d609d 50%, #70558f);
  border-color: #605086;
}

.teal {
  background: linear-gradient(90deg, #5eb5cd, #4aa8c0 50%, #3d94ab);
  border-color: #33899e;
}

.legend {
  margin: 9px 0 0 28px;
  padding: 0;
  list-style: none;
  color: #222;
  font-size: 10.5px;
  letter-spacing: -0.13px;
}

.legend li {
  height: 17.800px;
  display: flex;
  align-items: center;
  gap: 3.5px;
  white-space: nowrap;
}

.legend i {
  width: 11px;
  height: 11px;
}

.scrollbar {
  position: absolute;
  right: 14px;
  top: 131px;
  width: 8px;
  height: 592px;
  display: flex;
  flex-direction: column;
  align-items: center;
}

.up,
.dn {
  border: 4px solid transparent;
  border-top: 0;
  border-bottom: 5px solid #555;
}

.thumb {
  width: 6px;
  height: 521px;
  margin-top: 3px;
  border-radius: 3px;
  background: #606060;
}

.dn {
  margin-top: auto;
  transform: rotate(180deg);
}

/* 浮动层 */
.edge-strip {
  position: absolute;
  left: 0;
  top: 239px;
  width: 8px;
  height: 260px;
  border-radius: 0 7px 7px 0;
  background: #4f46e5;
}

.cursor {
  position: absolute;
  left: 98px;
  top: 243px;
}

.share {
  position: absolute;
  left: 327px;
  top: 680px;
  width: 713px;
  height: 50px;
  background: #202224;
  border: 1px solid #353638;
  box-shadow: 0 2px 3px #aaa;
  display: flex;
  align-items: center;
  color: #eee;
  font-size: 11.600px;
}

.share span {
  padding-bottom: 2px;
  letter-spacing: -0.11px;
}

.pause {
  width: 6px;
  height: 11px;
  margin: 0 10px;
  border: solid #ddd;
  border-width: 0 2px;
}

.share button {
  width: 107px;
  height: 38px;
  margin-left: auto;
  border-radius: 19px;
  background: #a8c7fa;
  color: #164276;
  font-size: 12.700px;
  font-weight: 500;
}

.share a {
  margin: 0 10px;
  color: #a8c7fa;
  font-size: 12px;
  text-decoration: underline;
}

/* 任务栏 */
.taskbar {
  height: 30px;
  background: #1e1e1e;
  color: #fff;
  display: flex;
}

.start {
  width: 38.500px;
  display: grid;
  place-items: center;
  padding-right: 2px;
}

.app {
  width: 37px;
  display: grid;
  place-items: center;
}

.running {
  background: linear-gradient(#efcba1, #efcba1) center bottom / 28px 2px no-repeat;
}

.current {
  background: #484848;
  box-shadow: inset 0 -2px #efcba1;
}

.tray {
  flex: 1;
  display: flex;
  align-items: center;
  padding-left: 221px;
  font-size: 13px;
}

.temp {
  margin-left: 9px;
}

.sky {
  margin-left: 10px;
}

.tray-icons {
  margin-left: 18px;
  overflow: visible;
}

.time {
  margin-left: 15px;
  font-size: 12px;
  letter-spacing: -0.3px;
}

.notice {
  margin-left: 21px;
}
</style>
